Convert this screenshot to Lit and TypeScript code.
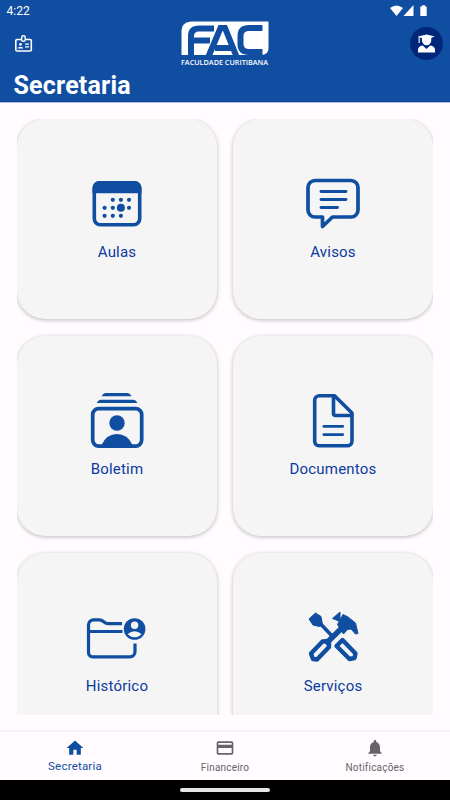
import { LitElement, html, css, svg } from "lit";
import { customElement } from "lit/decorators.js";

const icons = {
  aulas: svg`<rect x="4.300" y="4.800" width="45.400" height="42" rx="6" fill="none" stroke="currentColor" stroke-width="3.600"/>
    <path d="M2.500 15.200V9.500a6.500 6.500 0 0 1 6.500-6.500h36a6.500 6.500 0 0 1 6.500 6.500v5.700z" fill="currentColor"/>
    ${[[22.8, 21.8], [30.9, 21.8], [39, 21.8], [14.6, 29.8], [22.8, 29.8], [39, 29.8], [14.6, 37.8], [22.8, 37.8], [30.9, 37.8]].map(([x, y]) => svg`<circle cx=${x} cy=${y} r="2.1" fill="currentColor"/>`)}
    <circle cx="30.9" cy="29.8" r="4" fill="currentColor"/>`,
  avisos: svg`<g fill="none" stroke="currentColor" stroke-width="3.700" stroke-linecap="round" stroke-linejoin="round">
    <path d="M9 2.500h36a7 7 0 0 1 7 7v22.500a7 7 0 0 1-7 7H26.500L16.500 48.500V39H9a7 7 0 0 1-7-7V9.500a7 7 0 0 1 7-7z"/>
    <path d="M15 13.500h25M15 21.500h25M15 29.500h16.500" stroke-width="2.900"/></g>`,
  boletim: svg`<g fill="currentColor"><path d="M10.500 3.200q2-3.200 4-3.200h22q2.500 0 4 3.200zM5.600 10q2-3.200 4-3.200h32.800q2.500 0 4 3.200z"/>
    <circle cx="26" cy="30" r="7.700"/><path d="M10.500 52q5-11 15.500-11T41.500 52z"/></g>
    <rect x="1.700" y="15.600" width="49" height="37.500" rx="6" fill="none" stroke="currentColor" stroke-width="3.700"/>`,
  documentos: svg`<g fill="none" stroke="currentColor" stroke-width="3.600" stroke-linecap="round" stroke-linejoin="round">
    <path d="M6 1.800h15.500L39 19v28a4.800 4.800 0 0 1-4.800 4.800H6A4.500 4.500 0 0 1 1.700 47.500v-41A4.700 4.700 0 0 1 6 1.800z"/>
    <path d="M20.500 2.500v17q0 2 2 2H38.500"/><path d="M10.800 32.300h19M10.800 40.600h19" stroke-width="2.700"/></g>`,
  historico: svg`<g fill="none" stroke="currentColor" stroke-width="3.200" stroke-linejoin="round">
    <path d="M35 6.700H21c-4 0-4.500-3.900-8.500-3.900H6.500a5 5 0 0 0-5 5v28a4 4 0 0 0 4 4H43a5 5 0 0 0 5-5V26.500M1.500 14.500H35.500"/></g>
    <circle cx="47.600" cy="12" r="10.800" fill="currentColor"/><circle cx="47.600" cy="8.300" r="3.700" fill="#f5f5f5"/><path d="M40.500 17.200q7-6 14.200 0-7 6.200-14.200 0z" fill="#f5f5f5"/>`,
  servicos: svg`<path d="M8 8L25 26" stroke="currentColor" stroke-width="3.600"/>
    <path d="M1 8L7.500 2l5.500 3.500L14.500 14 11.500 15.500 5 14z" fill="currentColor" stroke="currentColor" stroke-linejoin="round"/>
    <path d="M38 13L17.500 33" stroke="currentColor" stroke-width="5.500"/>
    <path d="M24.500 7.500L32 1v9.500zM29.500 13.500l5.500-10 5 2.500 7.500 6 2.500 10.500-2.500.500-4.500-5-3.500.500-4 4.500z" fill="currentColor" stroke="currentColor" stroke-linejoin="round"/>
    <g fill="none" stroke="currentColor" stroke-width="4.400" stroke-linejoin="round"><path d="M3 42.500L14.500 30.500l6.500-.500v6L9 48.500l-4-.500z"/><path d="M28.500 35L34.500 29 47.500 42.500 46.500 47 41.500 48z"/></g>`,
};

const cards = [
  { label: "Aulas", icon: icons.aulas, w: 54, h: 51, top: 59 },
  { label: "Avisos", icon: icons.avisos, w: 54, h: 51, top: 59 },
  { label: "Boletim", icon: icons.boletim, w: 52.4, h: 55, top: 57 },
  { label: "Documentos", icon: icons.documentos, w: 41, h: 54, top: 58 },
  { label: "Histórico", icon: icons.historico, w: 59.5, h: 42, top: 64.5 },
  { label: "Serviços", icon: icons.servicos, w: 50, h: 50.5, top: 58 },
];

@customElement("app-root")
export class AppRoot extends LitElement {
  static styles = css`
    :host { display: flex; flex-direction: column; height: 800px; width: 450px; overflow: hidden; background: #fffbff; font-family: Roboto, "Liberation Sans", sans-serif; }
    * { box-sizing: border-box; }
    svg { display: block; flex: none; overflow: visible; }
    header { height: 103px; flex: none; background: #104ea1; color: #fff; border-bottom: 1px solid #b9bfdc; box-shadow: inset 0 -1px #07439b; }
    .status { height: 20px; padding: 1px 22px 0 6.500px; display: flex; align-items: center; justify-content: space-between; font-size: 12px; }
    .bar { height: 47px; display: grid; grid-template-columns: 1fr 88px 1fr; padding: 0 7px 0 14px; }
    .badge { margin-top: 14px; }
    .logo { margin: 1px 0 0 -3.500px; }
    .avatar { justify-self: end; margin-top: 7px; width: 33px; height: 33px; border-radius: 50%; background: #00277a; display: grid; place-items: center; }
    h1 { margin: 2px 0 0 13.500px; font-size: 25px; line-height: 34px; font-weight: 700; letter-spacing: .2px; }
    .scroll { margin: 16px 17px 0; height: 596px; overflow: hidden; flex: none; }
    .grid { display: grid; grid-template-columns: 200px 200px; gap: 16.800px 16px; }
    .card { height: 200px; border-radius: 28px; background: #f5f5f5; box-shadow: 0 1px 4px rgba(0, 0, 0, .27); color: #104ea1; display: grid; grid-template-rows: 123px 20px; justify-items: center; }
    .card .label { color: #0b3aa0; font-size: 15px; line-height: 20px; letter-spacing: .2px; }
    nav { margin-top: 15px; height: 50px; flex: none; border-top: 2px solid #f7f2f6; display: grid; grid-template-columns: repeat(3, 1fr); color: #666467; }
    .tab { display: flex; flex-direction: column; align-items: center; padding-top: 5.500px; font-size: 10px; letter-spacing: .2px; }
    .tab span { line-height: 14px; margin-top: 3px; }
    .active { color: #104ea1; font-size: 11.500px; }
    .active span { margin-top: 1.500px; }
    .system { flex: 1; background: #000; display: flex; justify-content: center; padding-top: 8px; }
    .pill { width: 90px; height: 4px; border-radius: 2px; background: #e5e5e5; }
  `;

  render() {
    return html`
      <header>
        <div class="status"><span>4:22</span>
          <svg width="38" height="12" viewBox="0 0 38 12" fill="#fff"><path d="M0 3Q6.500-2 13 3L6.500 11zM23.500 0v11H13.500zM30.300 1.500h1.700V.3h3v1.200h1.700V11h-6.400z"/></svg>
        </div>
        <div class="bar">
          <svg class="badge" width="18" height="19" viewBox="0 0 18 19"><rect x="1.800" y="5.500" width="15.500" height="11.500" rx="1.300" fill="none" stroke="#fff" stroke-width="1.600"/><rect x="7.700" y="1.800" width="3.500" height="5.500" rx="1.500" fill="#104ea1" stroke="#fff" stroke-width="1.400"/><circle cx="6.500" cy="10.300" r="1.400" fill="#fff"/><path d="M3.800 14.500v-.8q2.700-2 5.300 0v.8zM11 9.500h4v1.300h-4zM11 12.300h4v1.300h-4z" fill="#fff"/></svg>
          <svg class="logo" width="88" height="47" viewBox="0 0 88 47">
            <path d="M11 .500H87.500V27Q87.500 34 80 34H.500V11Q.500.500 11 .500z" fill="#fff"/>
            <g fill="none" stroke="#104ea1" stroke-width="6"><path d="M10 34.500V15Q10 7.500 18 7.500H33M13 19.500H29"/><path d="M27.500 35.500L39.500 7H44L55.500 35.500M34 27H50"/><path d="M81.500 7H68Q59.500 7 59.500 15V23Q59.500 31 68 31H81.500"/></g>
            <text x="0" y="44.200" fill="#fff" font-family="Open Sans" font-size="7.300" font-weight="600" textLength="87" lengthAdjust="spacingAndGlyphs">FACULDADE CURITIBANA</text>
          </svg>
          <div class="avatar"><svg width="17" height="19" viewBox="0 0 17 19" fill="#fff"><path d="M0 2.500L8.500.500 17 2.500 13.300 3.800V6a4.700 5.300 0 0 1-9.400 0V4L1.700 3.500V9H.600V3zM0 18.500v-2.500q0-3.800 4.800-4.500l3.700 3.500 3.700-3.500Q17 12.200 17 16v2.500z"/></svg></div>
        </div>
        <h1>Secretaria</h1>
      </header>
      <div class="scroll"><div class="grid">
        ${cards.map((c) => html`<div class="card"><svg width=${c.w} height=${c.h} viewBox="0 0 ${c.w} ${c.h}" style="margin-top:${c.top}px">${c.icon}</svg><span class="label">${c.label}</span></div>`)}
      </div></div>
      <nav>
        <div class="tab active"><svg width="20" height="20" viewBox="0 0 24 24" fill="currentColor"><path d="M10 20v-6h4v6h5v-8h3L12 3 2 12h3v8z"/></svg><span>Secretaria</span></div>
        <div class="tab"><svg width="20" height="20" viewBox="0 0 24 24" fill="currentColor"><path d="M20 4H4c-1.110 0-1.990.89-1.990 2L2 18c0 1.110.89 2 2 2h16c1.110 0 2-.89 2-2V6c0-1.110-.89-2-2-2zm0 14H4v-6h16v6zm0-10H4V6h16v2z"/></svg><span>Financeiro</span></div>
        <div class="tab"><svg width="20" height="20" viewBox="0 0 24 24" fill="currentColor"><path d="M12 22c1.100 0 2-.9 2-2h-4c0 1.100.89 2 2 2zm6-6v-5c0-3.070-1.640-5.640-4.500-6.320V4c0-.83-.67-1.500-1.500-1.500s-1.500.67-1.500 1.500v.68C7.630 5.360 6 7.920 6 11v5l-2 2v1h16v-1l-2-2z"/></svg><span>Notificações</span></div>
      </nav>
      <div class="system"><div class="pill"></div></div>
    `;
  }
}
